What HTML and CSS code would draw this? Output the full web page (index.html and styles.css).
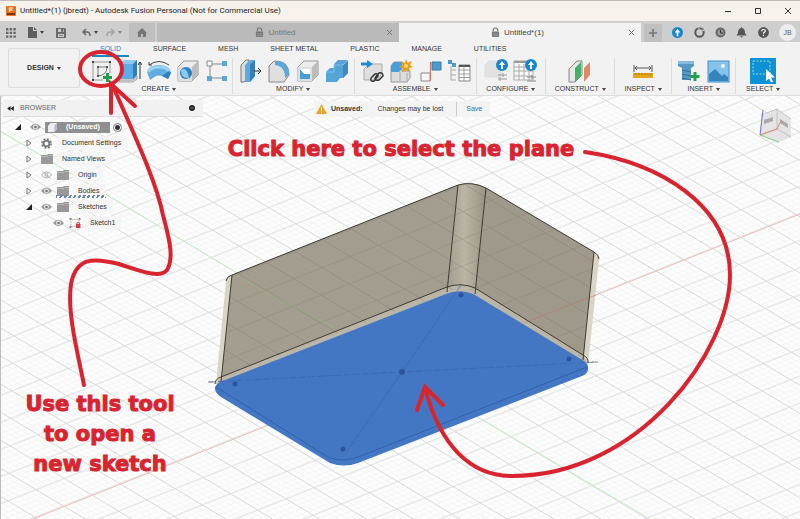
FILE: index.html
```
<!DOCTYPE html>
<html lang="en">
<head>
    <meta charset="UTF-8">
    <meta name="viewport" content="width=device-width, initial-scale=1.0">
    <title>Untitled*(1) - Autodesk Fusion Personal</title>
    <link rel="stylesheet" href="styles.css">
</head>
<body>

<!-- shared icons -->
<svg class="defs" width="0" height="0" aria-hidden="true">
    <symbol id="lock" viewBox="0 0 10 12"><path d="M2.5 5V3.500a2.500 2.500 0 0 1 5 0V5" fill="none" stroke="#777" stroke-width="1.300"/><rect x="1" y="5" width="8" height="6" rx="1" fill="#777"/><path d="M2 7.500h6M2 9.500h6" stroke="#aaa" stroke-width=".7"/></symbol>
    <symbol id="eye" viewBox="0 0 12 8"><path d="M0 4Q6-3 12 4Q6 11 0 4z" fill="#9a9a9a"/><circle cx="6" cy="4" r="2.600" fill="#eee"/><circle cx="6" cy="4" r="1.500" fill="#777"/></symbol>
    <symbol id="eye-off" viewBox="0 0 12 8"><path d="M.5 4Q6-2.500 11.500 4Q6 10.500.5 4zM2 0l8 8" fill="none" stroke="#aaa"/><circle cx="6" cy="4" r="1.600" fill="none" stroke="#aaa"/></symbol>
    <symbol id="folder" viewBox="0 0 12 10"><path d="M0 1h6l1-1h5v10H0z" fill="#999"/><path d="M0 2.500h7l1-1h4" fill="none" stroke="#c5c5c5" stroke-width=".7"/></symbol>
    <symbol id="closed" viewBox="0 0 6 8"><path d="M1 1l4 3-4 3z" fill="#fff" stroke="#666" stroke-width=".9"/></symbol>
    <symbol id="open" viewBox="0 0 6 6"><path d="M6 0v6H0z" fill="#222"/></symbol>
    <symbol id="box" viewBox="0 0 24 24"><path d="M2 8l6-6h14v14l-6 6H2z" fill="#ececec" stroke="#999"/><path d="M16 8l6-6v14l-6 6z" fill="#bdbdbd"/><path d="M2 8h14v14H2z" fill="#dedede"/></symbol>
    <symbol id="boost" viewBox="0 0 12 12"><circle cx="6" cy="6" r="6" fill="#1686d0"/><path d="M6 2l3 4H7v4H5V6H3z" fill="#fff"/></symbol>
</svg>

<header class="titlebar">
    <svg class="logo" viewBox="0 0 10 10"><rect width="10" height="10" rx="1" fill="#e8711c"/><path d="M1 7h8v2H1z" fill="#7c3510"/><path d="M3.500 6V2h3.500M3.500 4h3" fill="none" stroke="#fff" stroke-width="1.200"/></svg>
    <span class="window-title">Untitled*(1) (jbredt) - Autodesk Fusion Personal (Not for Commercial Use)</span>
    <div class="window-buttons">
        <button aria-label="Minimize"><svg viewBox="0 0 8 8"><path d="M1 4.500h6"/></svg></button>
        <button aria-label="Maximize"><svg viewBox="0 0 8 8"><path d="M1.500 1.500h5v5h-5z"/></svg></button>
        <button aria-label="Close"><svg viewBox="0 0 8 8"><path d="M1 1l6 6M7 1l-6 6"/></svg></button>
    </div>
</header>

<div class="tabbar">
    <div class="quick">
        <button aria-label="Data panel"><svg viewBox="0 0 10 10" width="10" height="10" fill="#666"><path d="M0 0h2.400v2.400H0zM3.700 0h2.400v2.400H3.700zM7.400 0h2.400v2.400H7.400zM0 3.700h2.400v2.400H0zM3.700 3.700h2.400v2.400H3.700zM7.400 3.700h2.400v2.400H7.400zM0 7.400h2.400v2.400H0zM3.700 7.400h2.400v2.400H3.700zM7.400 7.400h2.400v2.400H7.400z"/></svg></button>
        <button class="file" aria-label="File"><svg viewBox="0 0 9 11" width="9" height="11"><path d="M0 0h5v4h4v7H0zM6 0l3 3H6z" fill="#5f5f5f"/></svg><i class="caret"></i></button>
        <button aria-label="Save"><svg viewBox="0 0 10 10" width="10" height="10"><path d="M0 0h9l1 1v9H0z" fill="#6a6a6a"/><path d="M2 1h6v3H2zM2 6h6v3H2z" fill="#ccc"/><path d="M5.500 1h1.500v2.500H5.500zM3 7.500h4" fill="#666" stroke="#666" stroke-width=".7"/></svg></button>
        <button class="undo" aria-label="Undo"><svg viewBox="0 0 9 9" width="9" height="9"><path d="M4 1L1 4l3 3M1 4h4q3 0 3 4" fill="none" stroke="#666" stroke-width="1.500"/></svg><i class="caret"></i></button>
        <button class="undo faded" aria-label="Redo"><svg viewBox="0 0 9 9" width="9" height="9"><path d="M5 1l3 3-3 3M8 4H4Q1 4 1 8" fill="none" stroke="#777" stroke-width="1.500"/></svg><i class="caret"></i></button>
    </div>
    <button class="home" aria-label="Home"><svg viewBox="0 0 10 9" width="10" height="9"><path d="M5 0l5 5H9v4H6V6H4v3H1V5H0z" fill="#777"/></svg></button>
    <div class="doc-tab">
        <span class="doc-name"><svg width="9" height="11"><use href="#lock"/></svg>Untitled</span>
        <button class="close" aria-label="Close Untitled"><svg viewBox="0 0 7 7"><path d="M1 1l5 5M6 1L1 6"/></svg></button>
    </div>
    <div class="doc-tab active">
        <span class="doc-name"><svg width="9" height="11"><use href="#lock"/></svg>Untitled*(1)</span>
        <button class="close" aria-label="Close Untitled*(1)"><svg viewBox="0 0 7 7"><path d="M1 1l5 5M6 1L1 6"/></svg></button>
    </div>
    <div class="account">
        <button class="add" aria-label="New design"><svg viewBox="0 0 10 10" width="10" height="10"><path d="M5 1v8M1 5h8" stroke="#777" stroke-width="1.700"/></svg></button>
        <button aria-label="Boost"><svg width="11" height="11"><use href="#boost"/></svg></button>
        <button aria-label="Extensions"><svg viewBox="0 0 11 11" width="11" height="11"><circle cx="5.500" cy="5.500" r="4.200" fill="none" stroke="#555" stroke-width="2"/><path d="M5 0v4l4-1 1 1" fill="none" stroke="#ccc"/></svg></button>
        <button aria-label="Job status"><svg viewBox="0 0 11 11" width="11" height="11"><circle cx="5.500" cy="5.500" r="5" fill="#666"/><circle cx="5.500" cy="5.500" r="3" fill="#999"/><path d="M5.500 3v3H8" fill="none" stroke="#333"/></svg></button>
        <button aria-label="Notifications"><svg viewBox="0 0 11 11" width="11" height="11"><path d="M5.500 0l1 1.200Q9 2 9 6l1.500 2.500H.5L2 6Q2 2 4.500 1.200zM4 9.200h3l-1.500 1.600z" fill="#555"/></svg></button>
        <button aria-label="Help"><svg viewBox="0 0 11 11" width="11" height="11"><circle cx="5.500" cy="5.500" r="5.400" fill="#555"/><path d="M3.700 4.300q0-1.800 1.800-1.800t1.800 1.500q0 .9-1 1.400-.8.400-.8 1.300M5.500 7.800v1.200" fill="none" stroke="#fff" stroke-width="1.200"/></svg></button>
        <button class="avatar">JB</button>
    </div>
</div>

<div class="ribbon">
    <button class="workspace">DESIGN <i class="caret"></i></button>
    <div class="ribbon-main">
        <nav class="ribbon-tabs">
            <a href="#" class="current">SOLID</a>
            <a href="#">SURFACE</a>
            <a href="#">MESH</a>
            <a href="#">SHEET METAL</a>
            <a href="#">PLASTIC</a>
            <a href="#">MANAGE</a>
            <a href="#">UTILITIES</a>
        </nav>
        <div class="groups">
            <div class="group create">
                <div class="tools">
                    <button aria-label="Create Sketch"><svg viewBox="0 0 24 24"><path d="M4 3h17v11M4 3v18h10" fill="none" stroke="#999"/><path d="M3 2h2v2H3zM20 2h2v2h-2zM3 20h2v2H3z" fill="#444"/><path d="M9 8h9q0 8-9 9z" fill="none" stroke="#777"/><path d="M8 7h2v2H8zM17 7h2v2h-2zM8 16h2v2H8z" fill="#555"/><path d="M18.500 14v9M14 18.500h9" stroke="#24a148" stroke-width="3"/></svg></button>
                    <button aria-label="Extrude"><svg viewBox="0 0 24 24"><path d="M2 5l4-4h13v15l-4 4H2z" fill="#8ec9f3"/><path d="M15 5l4-4v15l-4 4z" fill="#2c7fbf"/><path d="M2 5h13v15H2z" fill="#5fade8"/><path d="M1 21h14l4-4v3l-4 3H1z" fill="#ddd" stroke="#888" stroke-width=".7"/><path d="M22 20V3M20 6l2-3 2 3" fill="none" stroke="#333"/></svg></button>
                    <button aria-label="Revolve"><svg viewBox="0 0 24 24"><path d="M0 13Q2 6 12 6t12 7l-3 7-6-3q-3-1-6 0l-6 4z" fill="#5facdf"/><path d="M1 13Q4 8 12 8t11 5" fill="none" stroke="#9bd2f5" stroke-width="3"/><path d="M15 17l7-5 2 2-3 6z" fill="#3280ba"/><path d="M2 6Q12-1 22 6M2 3v3h3" fill="none" stroke="#444"/></svg></button>
                    <button aria-label="Hole"><svg><use href="#box"/><circle cx="10" cy="14" r="6" fill="#2e82bf"/><path d="M5 11q6-4 8 8-8 1-8-8z" fill="#8ccaf1"/></svg></button>
                    <button aria-label="Pattern"><svg viewBox="0 0 24 24"><path d="M5 5h14M5 5v14M5 19h14" stroke="#888"/><path d="M2 2h5v5H2z" fill="#fff" stroke="#888"/><path d="M17 2h5v5h-5zM2 17h5v5H2zM17 17h5v5h-5z" fill="#5aa6d9"/></svg></button>
                </div>
                <button class="group-name">CREATE <i class="caret"></i></button>
            </div>
            <div class="group modify">
                <div class="tools">
                    <button aria-label="Press Pull"><svg viewBox="0 0 24 24"><path d="M3 6l5-5h3v17l-5 5H3z" fill="#ddd" stroke="#777"/><path d="M7 6l5-5h5v16l-5 6H7z" fill="#5aa9df"/><path d="M12 6l5-5v16l-5 6z" fill="#357fb5"/><path d="M16 12h7M20 9l3 3-3 3" fill="none" stroke="#333"/></svg></button>
                    <button aria-label="Fillet"><svg viewBox="0 0 24 24"><path d="M2 23V7l5-5q15-1 15 14l-5 7z" fill="#dfdfdf" stroke="#888"/><path d="M8 2q14 0 14 14l-4 3Q18 7 8 6z" fill="#5aa8dc"/></svg></button>
                    <button aria-label="Shell"><svg><use href="#box"/><path d="M4 10h10v10H4z" fill="#fff"/><path d="M4 10l4 5h6v5H4z" fill="#4a9cd4"/></svg></button>
                    <button aria-label="Combine"><svg viewBox="0 0 24 24"><path d="M1 13l4-4h4V5l4-4h10v13l-5 5h-3l-3 4H1z" fill="#56a3d8"/><path d="M18 6l5-5v13l-5 5z" fill="#3b8ac2"/><path d="M1 13h8V6h9l5-5" fill="none" stroke="#82c0ea"/></svg></button>
                </div>
                <button class="group-name">MODIFY <i class="caret"></i></button>
            </div>
            <div class="group assemble">
                <div class="tools">
                    <button aria-label="Insert component"><svg viewBox="0 0 24 24"><path d="M4 10l5-5h13v9l-4 7H4z" fill="#dedede" stroke="#aaa"/><path d="M1 5h6" stroke="#2488cc" stroke-width="3"/><path d="M7 1l6 4-6 4z" fill="#2488cc"/><path d="M11 19l4-4q3-1 3 2l-4 5q-4 1-3-3M15 19l4-5q4-1 4 3l-4 4q-4 1-4-2" fill="none" stroke="#333" stroke-width="1.500"/></svg></button>
                    <button aria-label="New component"><svg viewBox="0 0 24 24"><path d="M2 7l3-4h8v9h8v7l-3 4H2z" fill="#ddd" stroke="#999"/><path d="M2 7l3-4h8v7l-3 3H2z" fill="#4a9dd8"/><path d="M11 13v9M18 14v8" stroke="#aaa"/><path d="M17 0l1.500 4L23 2l-2 4 3 2-4 1 1 4-4-2-4 2 1-4-4-1 4-2-2-4 4 2z" fill="#e99a16"/><circle cx="17" cy="7" r="2" fill="#ffdc6c"/></svg></button>
                    <button aria-label="Joint"><svg viewBox="0 0 24 24"><path d="M3 14h9v8H3z" fill="#f8f8f8" stroke="#888"/><path d="M14 3h9v8h-9z" fill="#4b9bd0" stroke="#3b7ba5"/><path d="M12.500 3v19" stroke="#df6d62"/></svg></button>
                    <button aria-label="Bill of materials"><svg viewBox="0 0 24 24"><path d="M4 7v14h5M4 11h5M4 16h5" fill="none" stroke="#aaa"/><path d="M1 1h4v4H1zM5 4h4v4H5z" fill="#4b9bd0"/><path d="M12 6h11v16H12z" fill="#fff" stroke="#888"/><path d="M12 7h11" stroke="#555" stroke-width="2"/><path d="M12 11h11M12 15h11M12 18.500h11M17 7v15" stroke="#888" stroke-width=".8"/></svg></button>
                </div>
                <button class="group-name">ASSEMBLE <i class="caret"></i></button>
            </div>
            <div class="group configure">
                <div class="tools">
                    <button aria-label="Configure design"><svg viewBox="0 0 24 24"><path d="M1 6l4-4h12v16H1z" fill="#e2e2e2" stroke="#ddd"/><path d="M14 16h9M14 20h9M19 14v4M16 18v4" stroke="#999"/><use href="#boost" x="12" y="0" width="12" height="12"/></svg></button>
                    <button aria-label="Configuration table"><svg viewBox="0 0 24 24"><path d="M1 2h19v19H1zM1 8h19M1 12h19M1 17h19M6 5v16M11 5v16M16 5v16" fill="#f8f8f8" stroke="#aaa"/><path d="M1 3h12" stroke="#999" stroke-width="2"/><path d="M14 18h9M14 22h9M19 16v4" stroke="#888"/><use href="#boost" x="12" y="0" width="12" height="12"/></svg></button>
                </div>
                <button class="group-name">CONFIGURE <i class="caret"></i></button>
            </div>
            <div class="group construct">
                <div class="tools">
                    <button aria-label="Offset plane"><svg viewBox="0 0 24 24"><path d="M1 10l8-8h5v14l-7 7H1z" fill="#e7e7e7" stroke="#888"/><path d="M7 9l6-6v14l-6 6z" fill="#45b06d"/><path d="M16 9l6-6v13l-6 7z" fill="#dd8b64"/></svg></button>
                </div>
                <button class="group-name">CONSTRUCT <i class="caret"></i></button>
            </div>
            <div class="group inspect">
                <div class="tools">
                    <button aria-label="Measure"><svg viewBox="0 0 24 24"><path d="M3 6v7M21 6v7M4 9h16M6 7L4 9l2 2M18 7l2 2-2 2" fill="none" stroke="#555"/><path d="M2 14h20v5H2z" fill="#e3a51d"/><path d="M5 14v2M8 14v2M11 14v2M14 14v2M17 14v2M20 14v2" stroke="#a87508"/></svg></button>
                </div>
                <button class="group-name">INSPECT <i class="caret"></i></button>
            </div>
            <div class="group insert">
                <div class="tools">
                    <button aria-label="Insert fastener"><svg viewBox="0 0 24 24"><path d="M1 2h16v5l-3 2v12H5V9L1 7z" fill="#5897bf"/><path d="M1 2h16v3H1z" fill="#85bbdc"/><path d="M5 11l9 2M5 15l9 2M5 19l9 2" stroke="#336e96"/><path d="M18 13v9M13.500 17.500h9" stroke="#24a148" stroke-width="3"/></svg></button>
                    <button aria-label="Canvas"><svg viewBox="0 0 24 24"><rect x="2" y="2" width="21" height="21" fill="#86c3eb" stroke="#3d8fc5"/><path d="M3 15l6-5 7 7 2-2 4 3v4H3z" fill="#3584bc"/><circle cx="17" cy="7" r="2" fill="#f2fbff"/></svg></button>
                </div>
                <button class="group-name">INSERT <i class="caret"></i></button>
            </div>
            <div class="group select">
                <div class="tools">
                    <button class="big" aria-label="Select"><svg viewBox="0 0 26 26"><rect width="26" height="26" fill="#0f91d8"/><path d="M3 3h17v13H3z" fill="none" stroke="#9ce0b3" stroke-dasharray="2 1.500"/><path d="M16 11v12l3-2.500 2 4 2-1-2-4h4z" fill="#fff"/></svg></button>
                </div>
                <button class="group-name">SELECT <i class="caret"></i></button>
            </div>
        </div>
    </div>
</div>

<main class="workarea">
    <section class="browser">
        <div class="browser-head">
            <svg viewBox="0 0 8 6" width="7" height="5"><path d="M4 0v6L0 3zM8 0v6L4 3z" fill="#222"/></svg>
            <h2>BROWSER</h2>
            <svg viewBox="0 0 8 8" width="6" height="6"><circle cx="4" cy="4" r="4" fill="#222"/><path d="M2 4h4" stroke="#999"/></svg>
        </div>
        <ul class="tree">
            <li class="root">
                <svg class="toggle"><use href="#open"/></svg><svg class="eye"><use href="#eye"/></svg>
                <label for="activate" class="root-name"><svg viewBox="0 0 10 10" width="9" height="9"><path d="M0 3l3-3h7v7L7 10H0z" fill="#eee"/><path d="M7 3l3-3v7l-3 3z" fill="#bbc"/></svg>(Unsaved)</label>
                <input type="radio" id="activate" checked>
            </li>
            <li class="level1">
                <svg class="toggle"><use href="#closed"/></svg>
                <svg class="gear" viewBox="0 0 12 12"><circle cx="6" cy="6" r="3.200" fill="none" stroke="#777" stroke-width="2"/><circle cx="6" cy="6" r="4.900" fill="none" stroke="#777" stroke-width="2" stroke-dasharray="2 1.850"/></svg>
                <span class="name">Document Settings</span>
            </li>
            <li class="level1"><svg class="toggle"><use href="#closed"/></svg><svg class="folder"><use href="#folder"/></svg><span class="name">Named Views</span></li>
            <li class="level1"><svg class="toggle"><use href="#closed"/></svg><svg class="eye"><use href="#eye-off"/></svg><svg class="folder"><use href="#folder"/></svg><span class="name">Origin</span></li>
            <li class="level1 marked"><svg class="toggle"><use href="#closed"/></svg><svg class="eye"><use href="#eye"/></svg><svg class="folder"><use href="#folder"/></svg><span class="name">Bodies</span></li>
            <li class="level1"><svg class="toggle"><use href="#open"/></svg><svg class="eye"><use href="#eye"/></svg><svg class="folder"><use href="#folder"/></svg><span class="name">Sketches</span></li>
            <li class="level2">
                <svg class="eye"><use href="#eye"/></svg>
                <svg class="folder" viewBox="0 0 12 11"><path d="M1.500 1.500h9v8h-9z" fill="none" stroke="#aaa" stroke-dasharray="2 1"/><path d="M0 0h2v2H0zM10 0h2v2h-2zM0 9h2v2H0z" fill="#777"/><path d="M7 6.500h5V11H7z" fill="#d43c44"/><path d="M8 6.500q0-2 1.500-2t1.500 2" fill="none" stroke="#d43c44"/></svg>
                <span class="name">Sketch1</span>
            </li>
        </ul>
    </section>

    <div class="notice">
        <svg viewBox="0 0 12 11" width="11" height="10"><path d="M6 0l6 11H0z" fill="#e9a227"/><path d="M6 3.500v4M6 8.500v1.200" stroke="#fff" stroke-width="1.200"/></svg>
        <strong>Unsaved:</strong>
        <span>Changes may be lost</span>
        <a href="#">Save</a>
    </div>
</main>

<!-- model, under the panels -->
<svg class="scene" viewBox="0 0 800 519" preserveAspectRatio="xMidYMin slice">
    <defs>
        <pattern id="grid" width="50" height="50" patternUnits="userSpaceOnUse" patternTransform="matrix(.564 -.224 .544 .326 402 372)">
            <path d="M5 0v50M15 0v50M35 0v50M45 0v50M0 5h50M0 15h50M0 35h50M0 45h50" stroke="#f1f3f3" stroke-width="1.400"/>
            <path d="M25 0v50M0 25h50" stroke="#d6d8d8" stroke-width="1.800"/>
        </pattern>
        <pattern id="grid-behind" width="50" height="50" patternUnits="userSpaceOnUse" patternTransform="matrix(.564 -.224 .544 .326 402 372)">
            <path d="M5 0v50M15 0v50M35 0v50M45 0v50M0 5h50M0 15h50M0 35h50M0 45h50" stroke="#8f897b" stroke-width="1" opacity=".25"/>
            <path d="M25 0v50M0 25h50" stroke="#7c776d" stroke-width="1.800" opacity=".8"/>
        </pattern>
        <linearGradient id="corner"><stop offset="0" stop-color="#a29c8d"/><stop offset=".45" stop-color="#bcb6a7"/><stop offset="1" stop-color="#989283"/></linearGradient>
    </defs>
    <rect width="800" height="519" fill="#fcfdfc"/>
    <!-- lines sit mid-tile, so half a tile back puts them on the axes -->
    <g transform="translate(-28 -3)">
        <rect width="830" height="530" fill="url(#grid)"/>
    </g>
    <path d="M0 131L160 227 402 372 650 519" fill="none" stroke="#c8f0c8"/>
    <path d="M33 519L402 372 800 214" fill="none" stroke="#f0bcbc"/>

    <!-- box walls -->
    <path d="M226 281q1-5 6-6L458 185q14-4 28 3l108 64q5 3 5 8L588 364 460 300 216 384z" fill="#d9d4c6"/>
    <path d="M232 275L458 185 447 293 221 382z" fill="#a49e90"/>
    <path d="M458 185q14-4 28 3L475 295q-14-9-28-2z" fill="url(#corner)"/>
    <path d="M486 188l108 64-11 108-108-65z" fill="#a09a8c"/>
    <path d="M221 377L447 287q14-5 28 1l108 67 5 8-128-60L216 384z" fill="#bbb6a8"/>
    <g transform="translate(-28 -3)">
        <path d="M260 278L486 188q14-4 28 3l108 64-11 106-108-66q-14-6-28 0L249 380z" fill="url(#grid-behind)" opacity=".5"/>
    </g>
    <path d="M234 275l99 52" stroke="#8bbf7c" opacity=".5"/>
    <path d="M530 321l66-26" stroke="#c98078" opacity=".6"/>
    <path d="M226 281q1-5 6-6L458 185q14-4 28 3l108 64q5 3 5 7M232 275L221 382M458 185L447 292M486 188L475 294M594 252L583 360M215 384q0-5 6-7L447 287q14-5 28 1l108 67q6 3 5 8" fill="none" stroke="#3e3a33" stroke-width="1"/>

    <!-- selected face -->
    <path d="M220 382L446 294q14-6 29 1l109 66q5 3 4 9-1 4-6 6L358 463q-14 5-28 0L221 397q-7-5-6-10 1-3 5-5z" fill="#4377c3"/>
    <path d="M216 387l112 70q15 6 30 0L587 367" fill="none" stroke="#2f61a8"/>
    <path d="M209 382l193-10 196-10M461 285L402 372 343 457" fill="none" stroke="#3564ab" stroke-width=".7" stroke-dasharray="7 2"/>
    <path d="M208 382h5M592 362h4" stroke="#888"/>
    <g fill="#2a559d">
        <circle cx="235" cy="384" r="2.500"/>
        <circle cx="402" cy="372" r="3"/>
        <circle cx="461" cy="295" r="2.500"/>
        <circle cx="569" cy="359" r="2.500"/>
        <circle cx="343" cy="449" r="2.500"/>
    </g>

    <!-- view cube -->
    <path d="M761 115l16-6 14 10v18l-14 6-17-8z" fill="#dedede" fill-opacity=".8"/>
    <path d="M777 109v20M777 129l14 8M777 129l-17 6M761 115l16-6 14 10" fill="none" stroke="#bbb" stroke-width=".8"/>
    <path d="M764 120l9-3v4l-9 3zM780 119l8 5v4l-8-5z" fill="#aaa"/>
    <path d="M760 135l3-25" stroke="#7475cf"/>
    <path d="M760 135l17-6 4-8" fill="none" stroke="#de8170"/>
    <path d="M760 135l19 7" stroke="#83d183"/>
</svg>

<!-- red notes on top of everything -->
<svg class="notes" viewBox="0 0 800 519" preserveAspectRatio="xMidYMin slice">
    <g fill="none" stroke="#d92430" stroke-width="4" stroke-linecap="round">
        <ellipse cx="101" cy="69" rx="21" ry="17"/>
        <path d="M84 385C77 350 67 312 71 284 76 258 92 257 119 264 141 271 160 279 167 270 175 257 168 235 163 215 156 180 132 130 112 84"/>
        <path d="M111 113V84l24 22"/>
        <path d="M585 152C660 163 730 205 730 275 730 350 640 476 512 476 470 476 440 445 425 388"/>
        <path d="M417 410l8-23 18 18"/>
    </g>
    <text x="401" y="156" class="note">Click here to select the plane</text>
    <text x="100" y="411" class="note">Use this tool</text>
    <text x="100" y="441" class="note">to open a</text>
    <text x="100" y="471" class="note">new sketch</text>
</svg>

</body>
</html>
```
FILE: styles.css
```
* {
    box-sizing: border-box;
}
body {
    margin: 0;
    min-height: 100vh;
    position: relative;
    display: flex;
    flex-direction: column;
    overflow: hidden;
    font-family: "Liberation Sans", Arial, sans-serif;
    font-size: 7px;
    line-height: 10px;
    color: #333;
}
button {
    display: flex;
    align-items: center;
    justify-content: center;
    padding: 0;
    border: none;
    background: none;
    font: inherit;
    color: inherit;
}
a {
    color: inherit;
    text-decoration: none;
}
svg {
    display: block;
    flex: none;
}
.defs {
    position: absolute;
}
.caret {
    border: 2px solid transparent;
    border-top: 3px solid #444;
    border-bottom: 0;
    margin-left: 3px;
}

/* title bar */
.titlebar {
    display: flex;
    align-items: center;
    height: 21px;
    padding: 0 6px;
    background: #f8f2ec;
    border-top: 1px solid #c4bcbc;
}
.logo {
    width: 10px;
    height: 10px;
    margin-right: 4px;
}
.window-title {
    flex: 1;
    font-family: Roboto, "Open Sans", sans-serif;
    font-size: 8px;
    color: #222;
}
.window-buttons {
    display: flex;
    gap: 22px;
    padding-right: 2px;
}
.window-buttons svg {
    width: 8px;
    height: 8px;
    fill: none;
    stroke: #333;
}

/* document tabs */
.tabbar {
    display: flex;
    align-items: stretch;
    height: 21px;
    padding-top: 2px;
    background: #cecece;
}
.quick {
    display: flex;
    gap: 16px;
    width: 129px;
    padding-left: 6px;
}
.quick .file {
    margin-left: -4px;
}
.quick .file + button {
    margin-left: -4px;
}
.quick .undo + .undo {
    margin-left: -8px;
}
.faded {
    opacity: .5;
}
.home {
    width: 26px;
    margin-right: 2px;
    background: #bfbfbf;
}
.doc-tab {
    flex: 1;
    display: flex;
    align-items: center;
    padding: 0 6px 0 8px;
    background: #bababa;
    color: #777;
    font-size: 8px;
}
.doc-tab.active {
    background: #f2f2f2;
    color: #444;
}
.doc-name {
    flex: 1;
    display: flex;
    align-items: center;
    justify-content: center;
    gap: 4px;
}
.close svg {
    width: 7px;
    height: 7px;
    stroke: #777;
}
.account {
    display: flex;
    align-items: center;
    justify-content: space-between;
    width: 159px;
    padding: 0 4px 0 3px;
}
.add {
    width: 18px;
    height: 18px;
    background: #c0c0c0;
}
.avatar {
    width: 17px;
    height: 17px;
    border-radius: 50%;
    background: #ededed;
    color: #666;
}

/* ribbon */
.ribbon {
    display: flex;
    height: 54px;
    background: #f2f2f2;
    border-bottom: 1px solid #ddd;
}
.workspace {
    width: 72px;
    height: 40px;
    margin: 6px 6px 0 8px;
    border: 1px solid #ddd;
    border-radius: 2px;
    font-weight: bold;
}
.ribbon-main {
    flex: 1;
}
.ribbon-tabs {
    display: flex;
    gap: 16px;
    height: 15px;
    padding-left: 6px;
    line-height: 14px;
}
.ribbon-tabs a {
    padding: 0 8px;
}
.ribbon-tabs .current {
    color: #1b86c4;
    border-bottom: 2px solid #1b86c4;
}
.groups {
    display: flex;
    padding: 1px 10px 0 0;
}
.group {
    border-right: 1px solid #ddd;
    height: 36px;
}
.create { flex: 147; }
.modify, .assemble { flex: 122; }
.configure, .construct { flex: 69; }
.inspect { flex: 56; }
.insert { flex: 64; }
.select { flex: 54; border: none; }
.tools {
    display: flex;
    align-items: center;
    justify-content: center;
    gap: 5px;
    height: 26px;
}
.tools svg {
    width: 24px;
    height: 24px;
}
.tools .big svg {
    width: 26px;
    height: 26px;
}
.group-name {
    margin: 0 auto;
    height: 10px;
}

/* panels over the model */
.workarea {
    position: relative;
    z-index: 1;
    flex: 1;
    display: flex;
    align-items: flex-start;
    border-left: 1px solid #bbb;
}
.browser {
    width: 202px;
    padding: 4px 0 0 2px;
}
.browser-head {
    display: flex;
    align-items: center;
    height: 17px;
    padding: 0 8px 0 4px;
    background: #f1f1f1;
    border-bottom: 1px solid #ddd;
}
.browser-head h2 {
    flex: 1;
    margin: 0 0 0 6px;
    font-size: 7px;
    font-weight: normal;
    color: #666;
}
.tree {
    list-style: none;
    margin: 2px 0 0;
    padding: 0;
}
.tree li {
    position: relative;
    display: flex;
    align-items: center;
    height: 16px;
}
.toggle {
    width: 6px;
    height: 8px;
    margin-right: 9px;
}
.eye {
    width: 11px;
    height: 8px;
    margin-right: 5px;
}
.folder {
    width: 12px;
    height: 10px;
    margin-right: 4px;
}
.gear {
    width: 11px;
    height: 11px;
    margin-right: 5px;
}
.name {
    padding: 2px 6px 2px 5px;
    background: rgba(244, 244, 244, .85);
}
.root {
    padding-left: 12px;
}
.root .eye {
    margin-right: 4px;
}
.root-name {
    display: flex;
    align-items: center;
    gap: 9px;
    width: 65px;
    height: 11px;
    padding-left: 3px;
    background: #8f8f8f;
    color: #fff;
    font-weight: bold;
}
.root input {
    appearance: none;
    width: 9px;
    height: 9px;
    margin: 0 0 0 3px;
    border: 1px solid #777;
    border-radius: 50%;
    background: radial-gradient(#333 2px, #fff 3px);
}
.level1 {
    padding-left: 23px;
}
.level2 {
    padding-left: 50px;
}
.marked::after {
    content: "";
    position: absolute;
    left: 53px;
    bottom: 1px;
    width: 50px;
    height: 3px;
    background: repeating-linear-gradient(120deg, #6a84a8 0 2px, transparent 2px 4px);
}
.notice {
    display: flex;
    align-items: center;
    height: 16px;
    margin: 5px 0 0 111px;
    padding: 0 8px 0 2px;
    background: rgba(243, 243, 243, .9);
}
.notice strong {
    margin: 0 15px 0 4px;
}
.notice a {
    margin-left: 13px;
    padding-left: 9px;
    border-left: 1px solid #ccc;
    line-height: 14px;
    color: #1b78b8;
}

.scene,
.notes {
    position: absolute;
    left: 0;
    top: 0;
    width: 100%;
    height: 100%;
    pointer-events: none;
}
.scene {
    z-index: -1;
}
.notes {
    z-index: 2;
}
.note {
    font-family: "DejaVu Sans", Verdana, sans-serif;
    font-size: 21px;
    font-weight: bold;
    text-anchor: middle;
    fill: #d92430;
    stroke: #d92430;
    stroke-width: 1px;
}
```
